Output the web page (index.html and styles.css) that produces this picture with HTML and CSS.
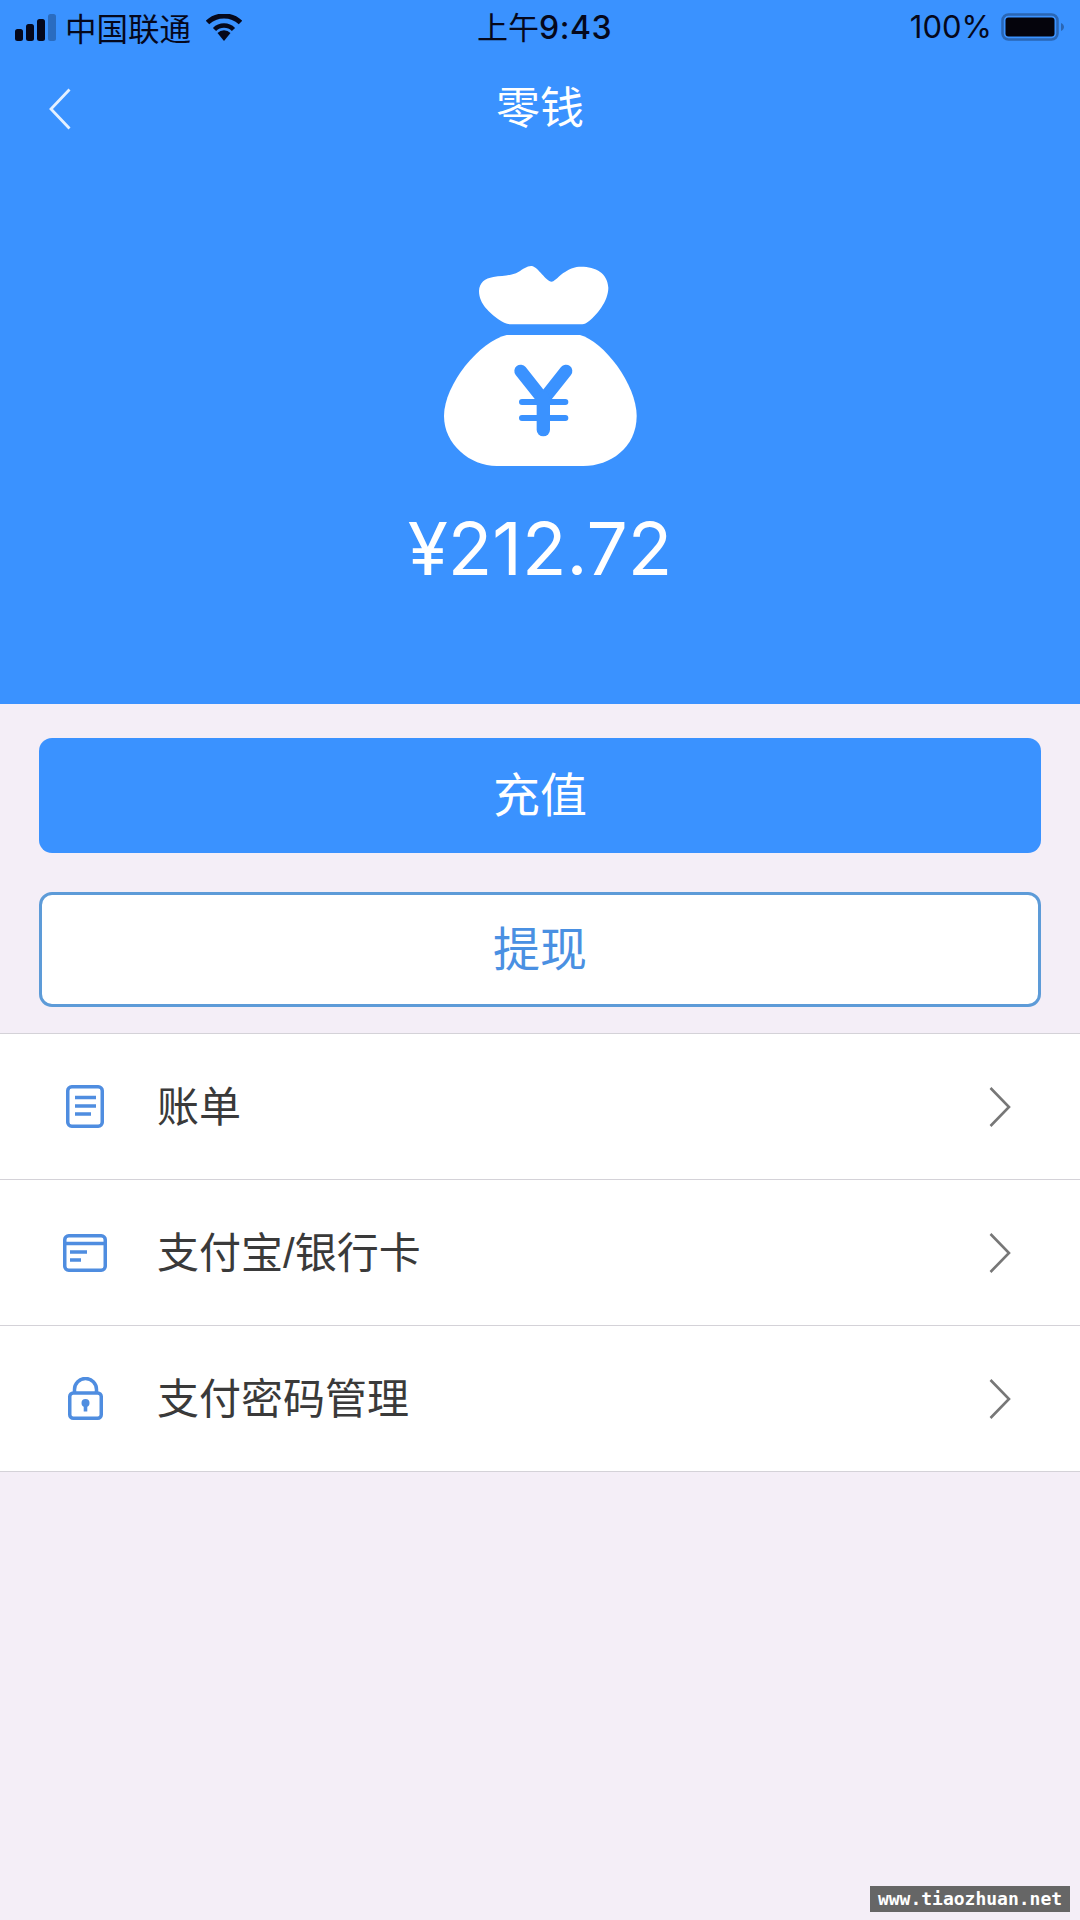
FILE: index.html
```html
<!DOCTYPE html>
<html lang="zh-CN">
<head>
    <meta charset="UTF-8">
    <meta name="viewport" content="width=device-width, initial-scale=1.0">
    <title>零钱</title>
    <link rel="stylesheet" href="styles.css">
</head>
<body>
    <div id="page">
        <header class="wallet">
            <div class="status">
                <div class="status-left">
                    <svg class="signal" width="41" height="27" viewBox="0 0 41 27">
                        <rect x="0" y="15" width="8" height="12" rx="2.5" fill="#05081c"/>
                        <rect x="11" y="10" width="8" height="17" rx="2.5" fill="#05081c"/>
                        <rect x="22" y="5" width="8" height="22" rx="2.5" fill="#05081c"/>
                        <rect x="33" y="0" width="8" height="27" rx="2.5" fill="#2a6cc0"/>
                    </svg>
                    <span class="carrier">中国联通</span>
                    <svg class="wifi" width="36" height="27" viewBox="0 0 36 27">
                        <path d="M18 27l-6.500-8a9 9 0 0 1 13 0z" fill="#05081c"/>
                        <path d="M8.500 15.500a13.500 13.500 0 0 1 19 0" fill="none" stroke="#05081c" stroke-width="4.500"/>
                        <path d="M1.500 8.500a24 24 0 0 1 33 0" fill="none" stroke="#05081c" stroke-width="5"/>
                    </svg>
                </div>
                <div class="time">上午<b>9:43</b></div>
                <div class="status-right">
                    <span class="percent">100%</span>
                    <svg class="battery" width="64" height="28" viewBox="0 0 64 28">
                        <rect x="1.500" y="1.500" width="55" height="25" rx="6" fill="none" stroke="#2a66b4" stroke-width="2.500"/>
                        <rect x="4.500" y="4.500" width="49" height="19" rx="3" fill="#05040c"/>
                        <path d="M60 10c2 1 3 2.500 3 4s-1 3-3 4z" fill="#2a66b4"/>
                    </svg>
                </div>
            </div>
            <div class="nav">
                <svg class="back" width="22" height="42" viewBox="0 0 22 42">
                    <path d="M20.500 1.500L2 21l18.500 19.500" fill="none" stroke="#e4f0ff" stroke-width="2.800"/>
                </svg>
                <h1 class="title">零钱</h1>
            </div>
            <svg class="bag" width="200" height="210" viewBox="150 60 600 630">
                <path d="M267 150C268 125 285 112 310 108C340 104 365 104 385 93C400 84 412 74 425 75C445 78 468 122 485 122C498 122 515 88 560 78C610 74 652 92 655 140C655 180 620 225 590 245C585 249 580 250 570 250H365C350 250 340 246 325 235C300 215 267 190 267 150Z" fill="#fff"/>
                <path d="M350 282H570C640 300 740 430 740 525C740 620 660 675 580 675H320C240 675 162 610 162 525C162 430 270 300 350 282Z" fill="#fff"/>
                <path d="M392 390L460 476L528 390" fill="none" stroke="#3a92ff" stroke-width="38" stroke-linecap="round" stroke-linejoin="round"/>
                <path d="M460 470V566" fill="none" stroke="#3a92ff" stroke-width="40" stroke-linecap="round"/>
                <path d="M396 483H526M396 531H526" fill="none" stroke="#3a92ff" stroke-width="18" stroke-linecap="round"/>
            </svg>
            <div class="amount">¥212.72</div>
        </header>

        <div class="actions">
            <button class="btn btn-solid">充值</button>
            <button class="btn btn-outline">提现</button>
        </div>

        <ul class="menu">
            <li class="menu-row">
                <span class="menu-icon">
                    <svg width="38" height="43" viewBox="0 0 38 43">
                        <rect x="1.750" y="1.750" width="34.500" height="39.500" rx="4" fill="none" stroke="#4f8de0" stroke-width="3.500"/>
                        <path d="M9 12.500H30M9 21H30M9 29H25" fill="none" stroke="#4f8de0" stroke-width="3.500"/>
                    </svg>
                </span>
                <span class="menu-label">账单</span>
                <svg class="chevron" width="22" height="40" viewBox="0 0 22 40">
                    <path d="M1.500 1L20 20L1.500 39" fill="none" stroke="#777" stroke-width="2.600"/>
                </svg>
            </li>
            <li class="menu-row">
                <span class="menu-icon">
                    <svg width="44" height="38" viewBox="0 0 44 38">
                        <rect x="1.750" y="1.750" width="40.500" height="34.500" rx="4" fill="none" stroke="#4f8de0" stroke-width="3.500"/>
                        <path d="M2 9.500H42M7 18H24M7 26H18" fill="none" stroke="#4f8de0" stroke-width="3.500"/>
                    </svg>
                </span>
                <span class="menu-label">支付宝/银行卡</span>
                <svg class="chevron" width="22" height="40" viewBox="0 0 22 40">
                    <path d="M1.500 1L20 20L1.500 39" fill="none" stroke="#777" stroke-width="2.600"/>
                </svg>
            </li>
            <li class="menu-row">
                <span class="menu-icon">
                    <svg width="35" height="43" viewBox="0 0 35 43">
                        <rect x="1.750" y="16" width="31.500" height="25.250" rx="3.500" fill="none" stroke="#4f8de0" stroke-width="3.500"/>
                        <path d="M6.500 16V12.500a11 11 0 0 1 22 0V16" fill="none" stroke="#4f8de0" stroke-width="3.500"/>
                        <circle cx="17.500" cy="26" r="4" fill="#4f8de0"/>
                        <path d="M17.500 27V34.500" fill="none" stroke="#4f8de0" stroke-width="3.600"/>
                    </svg>
                </span>
                <span class="menu-label">支付密码管理</span>
                <svg class="chevron" width="22" height="40" viewBox="0 0 22 40">
                    <path d="M1.500 1L20 20L1.500 39" fill="none" stroke="#777" stroke-width="2.600"/>
                </svg>
            </li>
        </ul>

        <div class="watermark">www.tiaozhuan.net</div>
    </div>
</body>
</html>
```

FILE: styles.css
```css
/* base */
* {
    box-sizing: border-box;
}

body {
    margin: 0;
    font-family: "Noto Sans CJK SC", "Noto Sans", sans-serif;
    background-color: #f4eef7;
}

#page {
    position: relative;
    width: 1080px;
    height: 1920px;
    overflow: hidden;
}

/* blue top block */
.wallet {
    height: 704px;
    background-color: #3a92ff;
    display: flex;
    flex-direction: column;
    align-items: center;
}

.status {
    width: 100%;
    height: 52px;
    padding: 0 0 0 15px;
    display: grid;
    grid-template-columns: 1fr auto 1fr;
    align-items: center;
    color: #05081c;
    font-size: 31px;
    line-height: 52px;
}

.status-left {
    display: flex;
    align-items: center;
}

.signal {
    margin-right: 9px;
}

.carrier {
    font-size: 31.5px;
}

.wifi {
    margin-left: 15px;
}

.time {
    font-family: Inter, "Noto Sans CJK SC", sans-serif;
    margin: 2px 6px 0 0;
}

.time b {
    font-size: 32px;
    font-weight: 500;
    letter-spacing: 0.5px;
}

.status-right {
    display: flex;
    align-items: center;
    justify-content: flex-end;
    padding-right: 15px;
}

.percent {
    font-family: Inter, sans-serif;
    margin-right: 9px;
}

.nav {
    position: relative;
    width: 100%;
    height: 112px;
    display: flex;
    align-items: center;
    justify-content: center;
}

.back {
    position: absolute;
    left: 49px;
    top: 36px;
}

.title {
    margin: 0 0 5px;
    color: #fff;
    font-size: 44px;
    font-weight: 400;
    line-height: 107px;
}

.bag {
    margin-top: 97px;
}

.amount {
    margin-top: 33px;
    color: #fff;
    font-family: Inter, sans-serif;
    font-size: 73px;
    line-height: 90px;
}

/* buttons */
.actions {
    padding: 34px 39px 0;
    display: flex;
    flex-direction: column;
    gap: 39px;
}

.btn {
    height: 115px;
    font-family: inherit;
    font-size: 47px;
    border-radius: 13px;
    padding: 0 0 8px;
}

.btn-solid {
    background-color: #3a92ff;
    color: #fff;
    border: none;
}

.btn-outline {
    background-color: #fff;
    color: #4a90e2;
    border: 3px solid #5d9bd8;
}

/* list */
.menu {
    list-style: none;
    margin: 26px 0 0;
    padding: 0;
    background-color: #fff;
    border-top: 1px solid #d4d2d8;
}

.menu-row {
    height: 146px;
    display: flex;
    align-items: center;
    padding: 0 69px 0 58px;
    border-bottom: 1px solid #d4d2d8;
}

.menu-icon {
    width: 54px;
    margin-right: 45px;
    display: flex;
    justify-content: center;
}

.menu-label {
    flex: 1;
    margin-bottom: 6px;
    color: #3a3a3a;
    font-family: "Liberation Sans", "Noto Sans CJK SC", sans-serif;
    font-size: 42px;
}

/* site stamp in the corner */
.watermark {
    position: absolute;
    right: 10px;
    bottom: 8px;
    width: 200px;
    height: 26px;
    background-color: #666;
    color: #fff;
    font-family: "DejaVu Sans Mono", monospace;
    font-size: 18px;
    font-weight: 700;
    line-height: 26px;
    text-align: center;
}
```
